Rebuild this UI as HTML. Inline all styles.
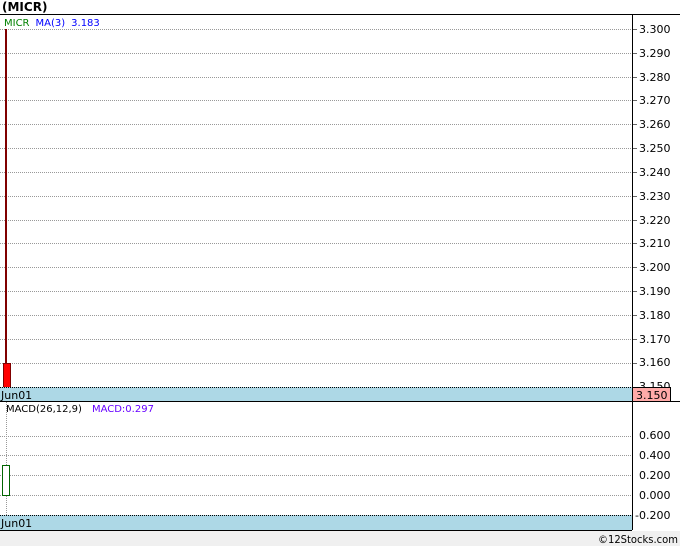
<!DOCTYPE html><html><head><style>body{margin:0;background:#fff}svg{display:block;font-family:Verdana,"DejaVu Sans",sans-serif}</style></head><body>
<svg width="680" height="546" xmlns="http://www.w3.org/2000/svg">
<rect width="680" height="546" fill="#fff"/>
<rect x="0" y="531" width="680" height="15" fill="#f0f0f0"/>
<text x="2" y="11" font-size="12" font-weight="bold" fill="#000">(MICR)</text>
<line x1="0" y1="14.5" x2="680" y2="14.5" stroke="#000"/>
<g stroke="#999" stroke-dasharray="1,1">
<line x1="0" y1="29.5" x2="632" y2="29.5"/><line x1="0" y1="53.5" x2="632" y2="53.5"/><line x1="0" y1="77.5" x2="632" y2="77.5"/><line x1="0" y1="100.5" x2="632" y2="100.5"/><line x1="0" y1="124.5" x2="632" y2="124.5"/><line x1="0" y1="148.5" x2="632" y2="148.5"/><line x1="0" y1="172.5" x2="632" y2="172.5"/><line x1="0" y1="196.5" x2="632" y2="196.5"/><line x1="0" y1="220.5" x2="632" y2="220.5"/><line x1="0" y1="243.5" x2="632" y2="243.5"/><line x1="0" y1="267.5" x2="632" y2="267.5"/><line x1="0" y1="291.5" x2="632" y2="291.5"/><line x1="0" y1="315.5" x2="632" y2="315.5"/><line x1="0" y1="339.5" x2="632" y2="339.5"/><line x1="0" y1="363.5" x2="632" y2="363.5"/>
<line x1="0" y1="436.5" x2="632" y2="436.5"/><line x1="0" y1="455.5" x2="632" y2="455.5"/><line x1="0" y1="475.5" x2="632" y2="475.5"/><line x1="0" y1="495.5" x2="632" y2="495.5"/>
<line x1="6.5" y1="402" x2="6.5" y2="515"/>
</g>
<g stroke="#666"><line x1="632" y1="29.5" x2="637" y2="29.5"/><line x1="632" y1="53.5" x2="637" y2="53.5"/><line x1="632" y1="77.5" x2="637" y2="77.5"/><line x1="632" y1="100.5" x2="637" y2="100.5"/><line x1="632" y1="124.5" x2="637" y2="124.5"/><line x1="632" y1="148.5" x2="637" y2="148.5"/><line x1="632" y1="172.5" x2="637" y2="172.5"/><line x1="632" y1="196.5" x2="637" y2="196.5"/><line x1="632" y1="220.5" x2="637" y2="220.5"/><line x1="632" y1="243.5" x2="637" y2="243.5"/><line x1="632" y1="267.5" x2="637" y2="267.5"/><line x1="632" y1="291.5" x2="637" y2="291.5"/><line x1="632" y1="315.5" x2="637" y2="315.5"/><line x1="632" y1="339.5" x2="637" y2="339.5"/><line x1="632" y1="363.5" x2="637" y2="363.5"/></g>
<g font-size="11" fill="#000">
<text x="639" y="33">3.300</text><text x="639" y="57">3.290</text><text x="639" y="81">3.280</text><text x="639" y="104">3.270</text><text x="639" y="128">3.260</text><text x="639" y="152">3.250</text><text x="639" y="176">3.240</text><text x="639" y="200">3.230</text><text x="639" y="224">3.220</text><text x="639" y="247">3.210</text><text x="639" y="271">3.200</text><text x="639" y="295">3.190</text><text x="639" y="319">3.180</text><text x="639" y="343">3.170</text><text x="639" y="366">3.160</text><text x="639" y="390">3.150</text>
<text x="639" y="439">0.600</text><text x="639" y="459">0.400</text><text x="639" y="479">0.200</text><text x="639" y="499">0.000</text><text x="635" y="519">-0.200</text>
</g>
<line x1="6" y1="29" x2="6" y2="363" stroke="#800000" stroke-width="2"/>
<rect x="3.5" y="363.5" width="7" height="24" fill="#f00" stroke="#800000"/>
<rect x="0" y="387" width="632" height="14" fill="#add8e6"/>
<line x1="0" y1="387.5" x2="632" y2="387.5" stroke="#000" stroke-dasharray="1,1"/>
<rect x="632.5" y="387.5" width="38" height="14" fill="#ffaaa8" stroke="#000"/>
<text x="636" y="399" font-size="11">3.150</text>
<text x="1" y="399" font-size="11">Jun01</text>
<line x1="0" y1="401.5" x2="680" y2="401.5" stroke="#000"/>
<text x="4" y="26" font-size="10"><tspan fill="#008000">MICR</tspan><tspan fill="#0000ff" dx="6">MA(3)</tspan><tspan fill="#0000ff" dx="6">3.183</tspan></text>
<text x="6" y="412" font-size="10"><tspan fill="#000">MACD(26,12,9)</tspan><tspan fill="#6600ff" dx="10">MACD:0.297</tspan></text>
<rect x="2.5" y="465.5" width="7" height="30" fill="#fff" stroke="#006400"/>
<rect x="0" y="515" width="632" height="15" fill="#add8e6"/>
<line x1="0" y1="515.5" x2="632" y2="515.5" stroke="#000" stroke-dasharray="1,1"/>
<text x="1" y="527" font-size="11">Jun01</text>
<line x1="632.5" y1="14" x2="632.5" y2="530" stroke="#000"/>
<line x1="0" y1="530.5" x2="632" y2="530.5" stroke="#000"/>
<text x="678" y="543" font-size="11" fill="#000" text-anchor="end" textLength="80" lengthAdjust="spacingAndGlyphs">©12Stocks.com</text>
</svg></body></html>
